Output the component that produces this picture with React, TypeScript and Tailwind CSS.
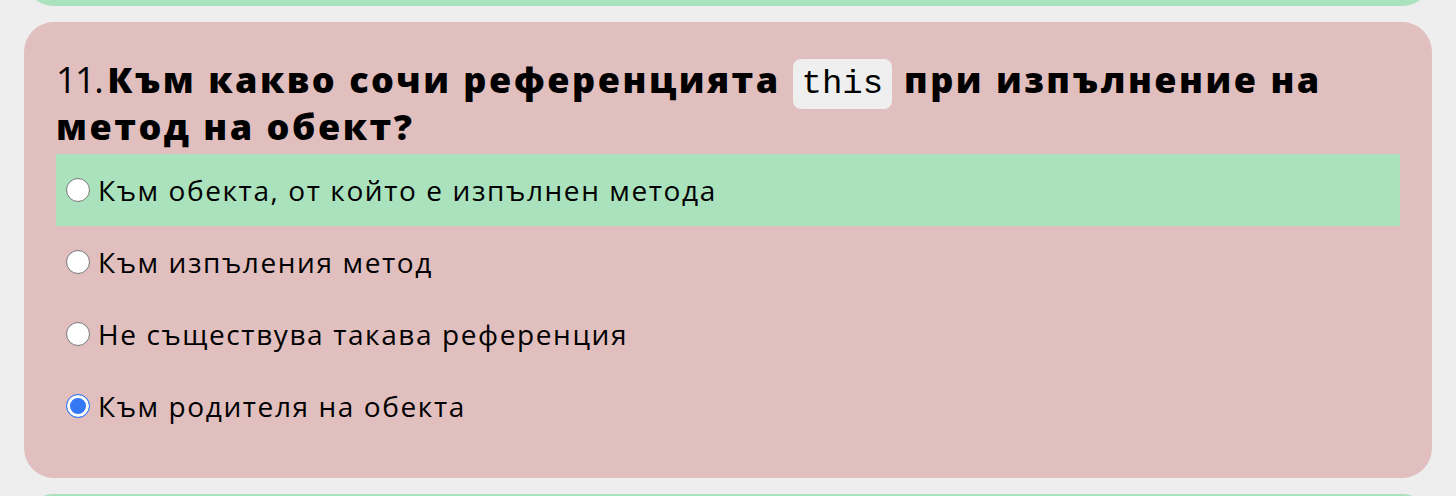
import { useState } from "react";

const answers = [
  "Към обекта, от който е изпълнен метода",
  "Към изпъления метод",
  "Не съществува такава референция",
  "Към родителя на обекта",
];

export default function App() {
  const [selected, setSelected] = useState(3);
  const correct = 0;

  return (
    <div
      lang="bg"
      className="h-[496px] overflow-hidden bg-[#eeeeee] px-6 text-black"
      style={{ fontFamily: "'Open Sans', 'Noto Sans', sans-serif" }}
    >
      <div className="flex flex-col gap-4">
        {/* previous question (scrolled away) */}
        <div className="-mt-[94px] h-[100px] rounded-[30px] bg-[#a9e2bc]" />

        {/* current question */}
        <div className="rounded-[30px] bg-[#e0bfbe] px-8 pt-[34px] pb-9">
          <h2 className="text-[36px] leading-[47px] tracking-[2.5px]">
            <span className="mr-[5px] font-normal tracking-[-1.5px]">11.</span>
            <span className="font-extrabold">
              Към какво сочи референцията{" "}
              <code
                className="rounded-lg bg-[#efefef] px-[9px] py-1.5 text-[34px] leading-none font-normal tracking-normal"
                style={{ fontFamily: "'Liberation Mono', monospace" }}
              >
                this
              </code>{" "}
              при изпълнение на метод на обект?
            </span>
          </h2>

          <div className="mt-1 flex flex-col">
            {answers.map((text, i) => (
              <label
                key={i}
                className={
                  "flex h-[72px] cursor-pointer items-center gap-2 px-[10px] text-[28px] tracking-[1.6px] " +
                  (i === correct ? "bg-[#a9e2bc]" : "")
                }
              >
                <input
                  type="radio"
                  name="q11"
                  checked={selected === i}
                  onChange={() => setSelected(i)}
                  className="h-6 w-6 shrink-0 appearance-none rounded-full border-[1.5px] border-[#767676] bg-white checked:border-[#3478f6] checked:bg-[#3478f6] checked:shadow-[inset_0_0_0_3px_white]"
                />
                <span>{text}</span>
              </label>
            ))}
          </div>
        </div>

        {/* next question */}
        <div className="h-[100px] rounded-[30px] bg-[#a9e2bc]" />
      </div>
    </div>
  );
}
